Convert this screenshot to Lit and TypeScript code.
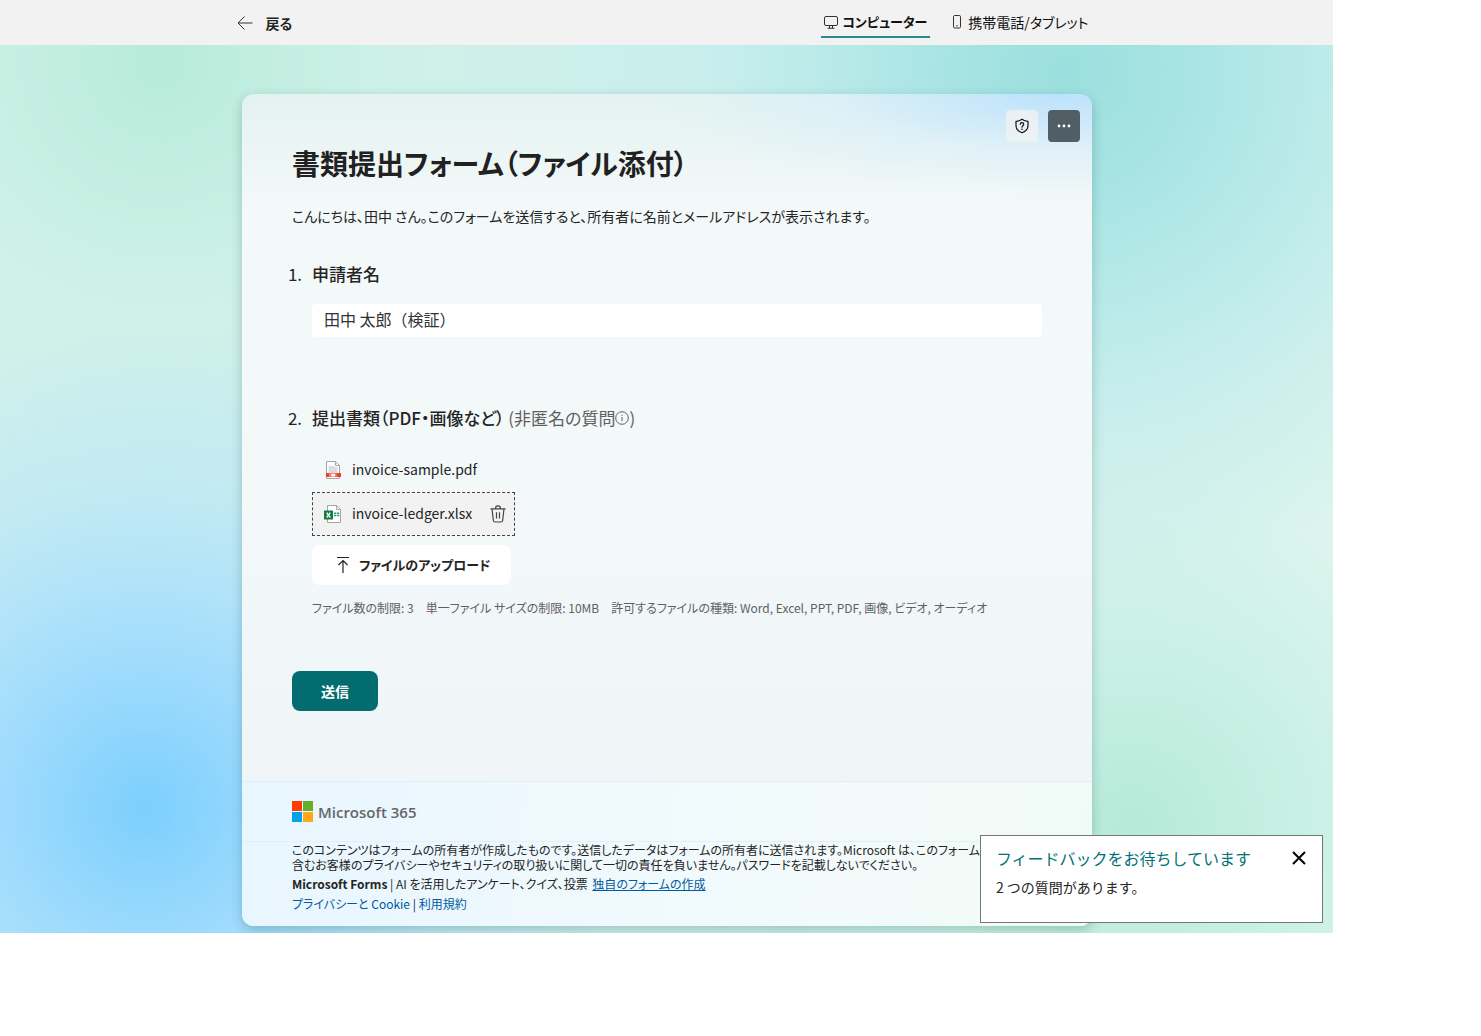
import { LitElement, html, css, svg } from "lit";
import { customElement, property, state } from "lit/decorators.js";
import { classMap } from "lit/directives/class-map.js";

interface UploadedFile {
  name: string;
  kind: "pdf" | "excel";
}

const pdfIcon = svg`
  <svg viewBox="0 0 18 18" width="18" height="18" aria-hidden="true">
    <path d="M2.500 .5h9l4 4v13h-13z" fill="#fff" stroke="#a6a6a6" />
    <path d="M11.500 .5v4h4" fill="none" stroke="#a6a6a6" />
    <path d="M4.500 5h6v1h3v6h-9z" fill="#dcdcdc" />
    <path d="M2 12h3.500v4H2zM12.500 12H17v4h-4.500z" fill="#e5432d" />
    <path d="M5.500 12h7.500v4H5.500z" fill="#ff6a52" />
    <path d="M7.200 12.800h4v2.600h-4z" fill="#fff" />
  </svg>`;

const excelIcon = svg`
  <svg viewBox="0 0 18 18" width="18" height="18" aria-hidden="true">
    <path d="M3.500 .5h9l4 4v13h-13z" fill="#fff" stroke="#a6a6a6" />
    <path d="M12.500 .5v4h4" fill="none" stroke="#a6a6a6" />
    <path d="M10 7.500h2.300v1.500H10zM13 7.500h2.300v1.500H13zM10 9.700h2.300v1.500H10zM13 9.700h2.300v1.500H13z" fill="#21a366" />
    <rect y="5.500" width="9" height="9" rx=".6" fill="#107c41" />
    <path d="M2.700 7.600l3.600 4.900M6.300 7.600l-3.600 4.900" stroke="#fff" stroke-width="1.300" />
  </svg>`;

@customElement("preview-bar")
export class PreviewBar extends LitElement {
  @state() private device: "desktop" | "mobile" = "desktop";

  static styles = css`
    :host {
      display: block;
      background: #f2f2f2;
    }
    .inner {
      box-sizing: border-box;
      display: flex;
      justify-content: space-between;
      max-width: 858px;
      height: 45px;
      margin: 0 auto;
    }
    button {
      display: flex;
      align-items: center;
      padding: 0;
      border: 0;
      background: none;
      color: #111;
      font: inherit;
      cursor: pointer;
    }
    .back {
      gap: 12px;
      color: #242424;
      font-weight: 700;
    }
    .tabs {
      display: flex;
      align-items: flex-start;
      gap: 17px;
      padding: 8px 4px 0 0;
    }
    .tab {
      gap: 4px;
      height: 28px;
      padding: 0 3px;
      border-bottom: 2px solid transparent;
      box-sizing: content-box;
    }
    .selected {
      border-bottom-color: #2b8a8c;
      font-size: 13px;
      font-weight: 700;
    }
  `;

  render() {
    return html`
      <div class="inner">
        <button class="back" type="button">
          <svg viewBox="0 0 16 16" width="16" height="16" fill="none" stroke="#333" aria-hidden="true">
            <path d="M15.500 8H1M7.500 1.500L1 8l6.500 6.500" />
          </svg>
          戻る
        </button>
        <div class="tabs" role="tablist">
          <button
            type="button"
            role="tab"
            aria-selected=${this.device === "desktop"}
            class=${classMap({ tab: true, selected: this.device === "desktop" })}
            @click=${() => (this.device = "desktop")}
          >
            <svg viewBox="0 0 14 14" width="14" height="14" fill="none" stroke="#333" aria-hidden="true">
              <rect x=".5" y="1.500" width="13" height="9" rx="1.500" />
              <path d="M5.500 10.500v2.500M8.500 10.500v2.500M3.500 13.300h7" />
            </svg>
            コンピューター
          </button>
          <button
            type="button"
            role="tab"
            aria-selected=${this.device === "mobile"}
            class=${classMap({ tab: true, selected: this.device === "mobile" })}
            @click=${() => (this.device = "mobile")}
          >
            <svg viewBox="0 0 14 14" width="14" height="14" fill="none" stroke="#333" aria-hidden="true">
              <rect x="3.500" y=".5" width="7" height="12.500" rx="1.200" />
              <path d="M6.200 10.800h1.600" />
            </svg>
            携帯電話/タブレット
          </button>
        </div>
      </div>
    `;
  }
}

@customElement("file-row")
export class FileRow extends LitElement {
  @property({ attribute: false }) file!: UploadedFile;
  @property({ type: Boolean, reflect: true }) active = false;

  static styles = css`
    :host {
      box-sizing: border-box;
      display: flex;
      align-items: center;
      gap: 10px;
      width: max-content;
      height: 44px;
      padding: 0 8px 0 11px;
      border: 1px solid transparent;
      color: #242424;
      font-size: 14px;
    }
    :host([active]) {
      border: 1px dashed #444;
      background: #f2f2f2;
    }
    .name {
      padding-bottom: 2px;
    }
    .remove {
      display: flex;
      margin-left: 8px;
      padding: 0;
      border: 0;
      background: none;
      cursor: pointer;
    }
  `;

  render() {
    return html`
      ${this.file.kind === "pdf" ? pdfIcon : excelIcon}
      <span class="name">${this.file.name}</span>
      ${this.active
        ? html`<button class="remove" type="button" aria-label="削除">
            <svg viewBox="0 0 16 18" width="16" height="18" fill="none" stroke="#444" stroke-width="1.200" aria-hidden="true">
              <path d="M.5 3.800h15M5.500 3.800C5.500 0 10.500 0 10.500 3.800M2 3.800l1.300 11.400c.1 1.100.9 1.800 1.900 1.800h5.600c1 0 1.800-.7 1.900-1.800L14 3.800M6.500 7.200v6.300M9.500 7.200v6.300" />
            </svg>
          </button>`
        : null}
    `;
  }
}

@customElement("feedback-prompt")
export class FeedbackPrompt extends LitElement {
  static styles = css`
    :host {
      box-sizing: border-box;
      display: block;
      width: 343px;
      padding: 10px 15px 25px;
      border: 1px solid #767676;
      background: #fff;
      color: #242424;
      font-size: 14px;
      line-height: 20px;
      font-feature-settings: normal;
    }
    .head {
      display: flex;
      align-items: center;
      justify-content: space-between;
    }
    .title {
      margin: 0;
      color: #007377;
      font-size: 16px;
      font-weight: 400;
      line-height: 24px;
    }
    .text {
      margin: 7px 0 0;
    }
    .close {
      display: flex;
      padding: 0;
      border: 0;
      background: none;
      cursor: pointer;
    }
  `;

  render() {
    return html`
      <div class="head">
        <h2 class="title">フィードバックをお待ちしています</h2>
        <button class="close" type="button" aria-label="閉じる">
          <svg viewBox="0 0 16 16" width="16" height="16" stroke="#000" stroke-width="2" aria-hidden="true">
            <path d="M2 2l12 12M14 2L2 14" />
          </svg>
        </button>
      </div>
      <p class="text">2 つの質問があります。</p>
    `;
  }
}

@customElement("app-root")
export class AppRoot extends LitElement {
  @state() private files: UploadedFile[] = [
    { name: "invoice-sample.pdf", kind: "pdf" },
    { name: "invoice-ledger.xlsx", kind: "excel" },
  ];

  static styles = css`
    :host {
      display: block;
      color: #242424;
      font-family: "Noto Sans CJK JP", sans-serif;
      font-size: 14px;
      line-height: 20px;
      font-feature-settings: "palt";
    }
    .shell {
      position: relative;
      width: 90%;
    }
    .stage {
      padding: 49px 16px 7px 17px;
      background:
        radial-gradient(circle 480px at 11% 86%, #7ccffd 0%, #9cdafd 27%, #b2e3f9 48%, rgba(192, 233, 243, 0.85) 68%, rgba(204, 239, 238, 0) 100%),
        radial-gradient(circle 520px at 80% 3%, #9be0de 0%, #a6e3e3 20%, #bcebea 50%, rgba(200, 238, 237, 0.8) 70%, rgba(208, 240, 238, 0) 100%),
        radial-gradient(circle 380px at 12% 2%, #b7ebda 0%, rgba(205, 241, 230, 0.9) 58%, rgba(208, 241, 235, 0) 100%),
        radial-gradient(circle 340px at 85% 88%, #b5ead8 0%, rgba(203, 241, 230, 0.9) 58%, rgba(214, 242, 235, 0) 100%),
        linear-gradient(90deg, #d1f1ec, #cbefec 60%, #dcf4ed);
    }
    .frame {
      max-width: 850px;
      margin: 0 auto;
      border-radius: 12px;
      box-shadow: 0 4px 12px rgba(0, 60, 60, 0.24);
    }
    .card {
      overflow: hidden;
      border-radius: 12px;
      background:
        radial-gradient(ellipse 420px 100px at 96% 0, #bce2fc 0%, rgba(216, 238, 250, 0.6) 55%, rgba(243, 248, 249, 0) 100%),
        linear-gradient(#e3f3ef, #f3f8f9 110px, #f3f8f9 400px, #f0f6f8 620px);
    }
    .actions {
      display: flex;
      justify-content: flex-end;
      gap: 10px;
      padding: 16px 12px 0;
    }
    .icon-button {
      display: grid;
      place-items: center;
      width: 32px;
      height: 32px;
      padding: 0;
      border: 0;
      border-radius: 4px;
      background: rgba(240, 242, 243, 0.8);
      cursor: pointer;
    }
    .dark {
      background: #525e65;
    }
    .body {
      padding: 3px 50px 70px;
    }
    .title {
      margin: 0;
      color: #212121;
      font-size: 28px;
      font-weight: 700;
      line-height: 36px;
    }
    .intro {
      margin: 25px 0 0;
    }
    .question {
      display: grid;
      grid-template-columns: 20px minmax(0, 1fr);
    }
    .first {
      margin-top: 36px;
    }
    .second {
      margin-top: 69px;
    }
    .number {
      margin-left: -4px;
      font-size: 17px;
      line-height: 24px;
    }
    .label {
      font-size: 17px;
      font-weight: 500;
      line-height: 24px;
    }
    .note {
      display: inline-flex;
      align-items: center;
      color: #616161;
      font-weight: 400;
    }
    .answer {
      grid-column: 2;
      margin-top: 18px;
    }
    .field {
      box-sizing: border-box;
      display: block;
      width: 100%;
      height: 33px;
      padding: 0 12px 3px;
      border: 0;
      border-radius: 4px;
      background: #fff;
      color: #333;
      font: inherit;
      font-size: 16px;
      font-feature-settings: normal;
    }
    .files {
      margin: 0;
      padding: 0;
      list-style: none;
    }
    .upload {
      display: flex;
      align-items: center;
      gap: 7px;
      height: 40px;
      margin-top: 9px;
      padding: 0 20px 0 22px;
      border: 0;
      border-radius: 8px;
      background: #fff;
      color: #242424;
      font: inherit;
      font-size: 13px;
      font-weight: 700;
      cursor: pointer;
    }
    .limits {
      display: flex;
      flex-wrap: wrap;
      gap: 0 12px;
      margin: 15px 0 0;
      color: #616161;
      font-size: 12px;
      line-height: 16px;
    }
    .submit {
      display: block;
      width: 86px;
      height: 40px;
      margin-top: 55px;
      padding: 0;
      border: 0;
      border-radius: 8px;
      background: #036c70;
      color: #fff;
      font: inherit;
      font-weight: 700;
      cursor: pointer;
    }
    .footer {
      border-top: 1px solid #dfeff6;
      background: linear-gradient(95deg, #e8f6ff, #f0f9fd 45%, #f3fbfa 75%, #f1fbf6);
      color: #242424;
      font-size: 12px;
      line-height: 16px;
    }
    .brand {
      display: flex;
      align-items: center;
      gap: 5px;
      height: 59px;
      padding: 0 50px;
      border-bottom: 1px solid #e0f0f6;
      color: #666;
      font-family: "Open Sans", sans-serif;
      font-size: 15px;
      font-weight: 600;
    }
    .legal {
      padding: 0 50px 14px;
    }
    .disclaimer {
      margin: 0;
      line-height: 15px;
    }
    .line {
      margin: 4px 0 0;
    }
    .product {
      font-weight: 700;
    }
    a {
      color: #005a9e;
      text-decoration: none;
    }
    .create {
      margin-left: 2px;
      text-decoration: underline;
    }
    .prompt {
      position: absolute;
      right: 10px;
      bottom: 10px;
    }
  `;

  render() {
    return html`
      <div class="shell">
        <preview-bar></preview-bar>
        <main class="stage">
          <div class="frame">
            <div class="card">
              <div class="actions">
                <button class="icon-button" type="button" aria-label="プライバシー">
                  <svg viewBox="0 0 16 16" width="16" height="16" fill="none" stroke="#111" stroke-width="1.200" aria-hidden="true">
                    <path d="M8 1.300c1.700 1.300 3.700 2 6 2.100v4.300c0 3.300-2.200 5.600-6 7-3.800-1.400-6-3.700-6-7V3.400C4.300 3.300 6.300 2.600 8 1.300z" stroke-linejoin="round" />
                    <path d="M6.300 6.300c0-2.300 3.400-2.300 3.400 0C9.700 7.700 8 7.700 8 9.200" stroke-linecap="round" />
                    <circle cx="8" cy="11.200" r=".8" fill="#111" stroke="none" />
                  </svg>
                </button>
                <button class="icon-button dark" type="button" aria-label="その他のオプション">
                  <svg viewBox="0 0 16 16" width="16" height="16" fill="#fff" aria-hidden="true">
                    <circle cx="3" cy="8" r="1.400" />
                    <circle cx="8" cy="8" r="1.400" />
                    <circle cx="13" cy="8" r="1.400" />
                  </svg>
                </button>
              </div>
              <form class="body" @submit=${(e: Event) => e.preventDefault()}>
                <h1 class="title">書類提出フォーム（ファイル添付）</h1>
                <p class="intro">
                  こんにちは、田中 さん。このフォームを送信すると、所有者に名前とメールアドレスが表示されます。
                </p>

                <div class="question first">
                  <span class="number">1.</span>
                  <label class="label" for="applicant">申請者名</label>
                  <div class="answer">
                    <input class="field" id="applicant" type="text" value="田中 太郎（検証）" />
                  </div>
                </div>

                <div class="question second">
                  <span class="number">2.</span>
                  <span class="label" id="documents"
                    >提出書類（PDF・画像など）
                    <span class="note"
                      >(非匿名の質問<svg viewBox="0 0 14 14" width="14" height="14" fill="none" stroke="#616161" aria-hidden="true">
                        <circle cx="7" cy="7" r="6.300" />
                        <path d="M7 6v4.200M7 3.800v1.200" /></svg
                      >)</span
                    ></span
                  >
                  <div class="answer">
                    <ul class="files" aria-labelledby="documents">
                      ${this.files.map(
                        (file, i) => html`<li><file-row .file=${file} ?active=${i === 1}></file-row></li>`
                      )}
                    </ul>
                    <button class="upload" type="button">
                      <svg viewBox="0 0 18 18" width="18" height="18" fill="none" stroke="#242424" stroke-width="1.200" aria-hidden="true">
                        <path d="M3 1.500h12M9 17V4.500M4.500 9L9 4.500 13.500 9" />
                      </svg>
                      ファイルのアップロード
                    </button>
                    <p class="limits">
                      <span>ファイル数の制限: 3</span>
                      <span>単一ファイル サイズの制限: 10MB</span>
                      <span>許可するファイルの種類: Word, Excel, PPT, PDF, 画像, ビデオ, オーディオ</span>
                    </p>
                  </div>
                </div>

                <button class="submit" type="submit">送信</button>
              </form>
              <footer class="footer">
                <div class="brand">
                  <svg viewBox="0 0 20 20" width="21" height="21" aria-hidden="true">
                    <path d="M0 0h9.500v9.500H0z" fill="#ff3c00" />
                    <path d="M10.500 0H20v9.500h-9.500z" fill="#66ad2c" />
                    <path d="M0 10.500h9.500V20H0z" fill="#00a3ee" />
                    <path d="M10.500 10.500H20V20h-9.500z" fill="#ffa81c" />
                  </svg>
                  Microsoft 365
                </div>
                <div class="legal">
                  <p class="disclaimer">
                    このコンテンツはフォームの所有者が作成したものです。送信したデータはフォームの所有者に送信されます。Microsoft
                    は、このフォームの所有者を<br />含むお客様のプライバシーやセキュリティの取り扱いに関して一切の責任を負いません。パスワードを記載しないでください。
                  </p>
                  <p class="line">
                    <span class="product">Microsoft Forms</span> | AI を活用したアンケート、クイズ、投票
                    <a class="create" href="#create">独自のフォームの作成</a>
                  </p>
                  <p class="line">
                    <a href="#privacy">プライバシーと Cookie</a> | <a href="#terms">利用規約</a>
                  </p>
                </div>
              </footer>
            </div>
          </div>
        </main>
        <feedback-prompt class="prompt"></feedback-prompt>
      </div>
    `;
  }
}
